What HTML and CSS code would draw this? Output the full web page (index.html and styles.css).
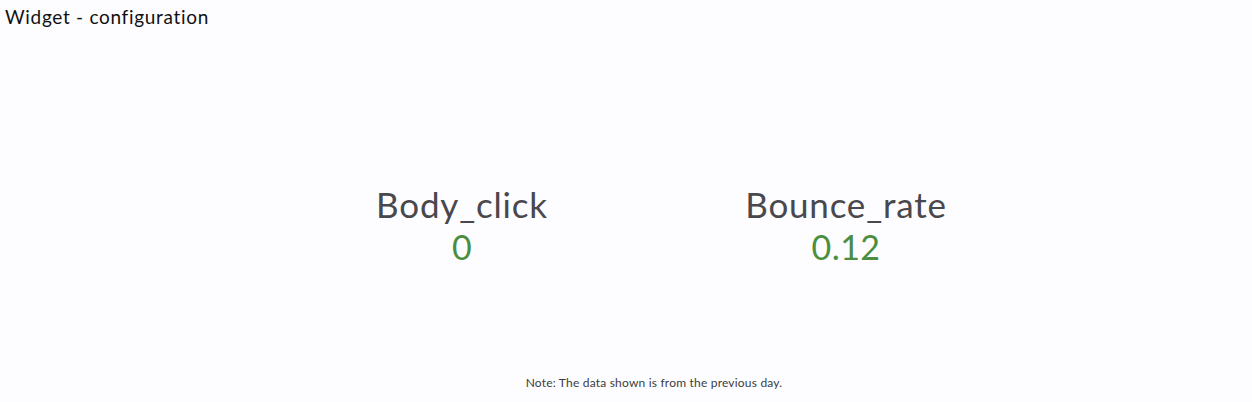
FILE: index.html
```html
<!DOCTYPE html>
<html>
<head>
<meta charset="utf-8">
<link rel="stylesheet" href="styles.css">
</head>
<body>
<div class="page">
  <div class="title">Widget - configuration</div>
  <div class="stats">
    <div class="stat">
      <div class="label">Body_click</div>
      <div class="value">0</div>
    </div>
    <div class="stat">
      <div class="label">Bounce_rate</div>
      <div class="value">0.12</div>
    </div>
  </div>
  <div class="note">Note: The data shown is from the previous day.</div>
</div>
</body>
</html>
```
FILE: styles.css
```css
html, body {
  margin: 0;
  padding: 0;
  background: #fdfdff;
}
.page {
  width: 1252px;
  height: 402px;
  display: flex;
  flex-direction: column;
  font-family: Lato, "Noto Sans", sans-serif;
}
.title {
  padding: 5px 0 0 5px;
  font-size: 19px;
  line-height: 24px;
  letter-spacing: 0.7px;
  color: #111;
}
.stats {
  flex: 1;
  display: flex;
  justify-content: center;
  align-items: flex-start;
  gap: 84px;
  padding-top: 154px;
  padding-left: 56px;
}
.stat {
  width: 300px;
  display: flex;
  flex-direction: column;
  align-items: center;
}
.label {
  font-size: 35px;
  line-height: 42px;
  letter-spacing: 0.8px;
  color: #49484d;
}
.value {
  font-size: 34px;
  line-height: 40px;
  letter-spacing: 0.5px;
  padding-top: 2px;
  color: #4b8e3f;
}
.note {
  text-align: center;
  font-size: 12px;
  line-height: 14px;
  letter-spacing: 0.2px;
  color: #3c3c40;
  padding-bottom: 12px;
  padding-left: 56px;
}
```
